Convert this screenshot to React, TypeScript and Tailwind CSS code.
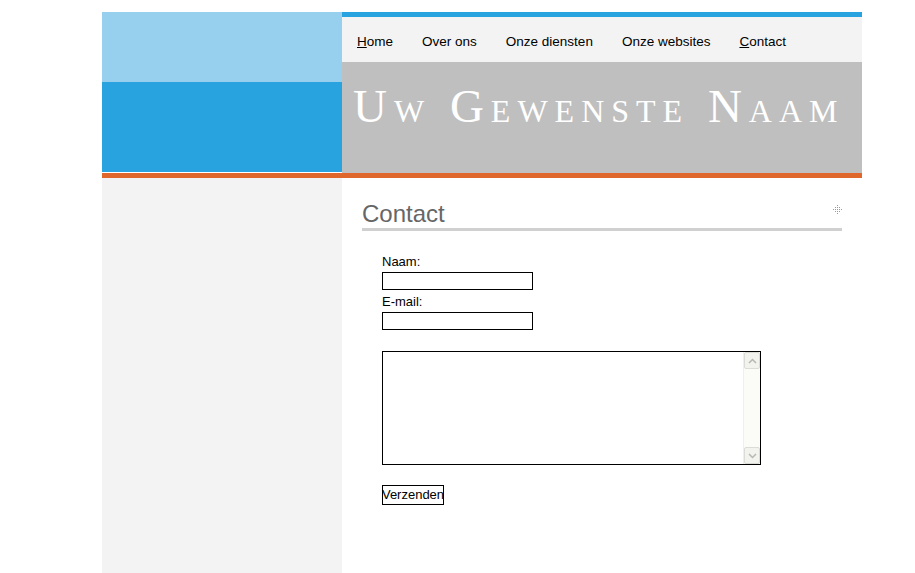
import React from 'react';

const navItems = [
  { first: 'H', rest: 'ome', u: true },
  { first: 'O', rest: 'ver ons', u: false },
  { first: 'O', rest: 'nze diensten', u: false },
  { first: 'O', rest: 'nze websites', u: false },
  { first: 'C', rest: 'ontact', u: true },
];

const TitleWord: React.FC<{ word: string }> = ({ word }) => (
  <span>
    <span className="text-[47px]">{word[0]}</span>
    <span className="text-[32px]">{word.slice(1).toUpperCase()}</span>
  </span>
);

const DotIcon = () => (
  <svg width="9" height="10" viewBox="0 0 9 10" className="mt-[5px]">
    {[
      [4, 0],
      [2, 2], [4, 2], [6, 2],
      [0, 4], [2, 4], [4, 4], [6, 4], [8, 4],
      [2, 6], [4, 6], [6, 6],
      [4, 8],
    ].map(([x, y], i) => (
      <rect key={i} x={x} y={y} width="1" height="1" fill="#9a9a9a" />
    ))}
  </svg>
);

const Scrollbar = () => (
  <div className="w-[17px] bg-[#fbfbf7] flex flex-col justify-between border-l border-[#f0f0ea]">
    <div className="h-[17px] bg-[#f2f2ee] border border-[#dcdcd6] rounded-[2px] flex items-center justify-center">
      <svg width="9" height="6" viewBox="0 0 9 6"><path d="M1 5 L4.5 1.5 L8 5" stroke="#b8b8b2" strokeWidth="1.5" fill="none" /></svg>
    </div>
    <div className="h-[17px] bg-[#f2f2ee] border border-[#dcdcd6] rounded-[2px] flex items-center justify-center">
      <svg width="9" height="6" viewBox="0 0 9 6"><path d="M1 1 L4.5 4.5 L8 1" stroke="#b8b8b2" strokeWidth="1.5" fill="none" /></svg>
    </div>
  </div>
);

export default function App() {
  return (
    <div className="min-h-screen bg-white pt-3 font-['Liberation_Sans',Arial,sans-serif] text-black">
      <div className="ml-[102px] w-[760px]">
        {/* header */}
        <div className="flex h-[161px]">
          <div className="w-[240px] flex flex-col">
            <div className="h-[70px] bg-[#97d0ef]" />
            <div className="h-[90px] bg-[#29a3df]" />
            <div className="h-[1px] bg-white" />
          </div>
          <div className="flex-1 flex flex-col">
            <div className="h-[5px] bg-[#29a3df]" />
            <nav className="h-[45px] bg-[#f3f3f3] flex gap-[29px] pl-[15px] pt-[17px] text-[13.5px] leading-[16px]">
              {navItems.map((n, i) => (
                <a key={i} href="#" className="text-black no-underline">
                  {n.u ? <u>{n.first}</u> : n.first}
                  {n.rest}
                </a>
              ))}
            </nav>
            <div className="h-[111px] bg-[#bfbfbf] pl-[11px] pt-[20px] text-white font-['Liberation_Serif',serif] text-[47px] leading-[48px] tracking-[7px] whitespace-nowrap">
              <TitleWord word="Uw" /> <TitleWord word="Gewenste" /> <TitleWord word="Naam" />
            </div>
          </div>
        </div>
        <div className="h-[5px] bg-[#e0672b]" />

        {/* body */}
        <div className="flex">
          <div className="w-[240px] h-[395px] bg-[#f3f3f3]" />
          <div className="flex-1 px-[20px] pt-[22px]">
            <div className="flex justify-between border-b-[3px] border-[#d0d0d0]">
              <h1 className="text-[24px] leading-[28px] text-[#666]">Contact</h1>
              <DotIcon />
            </div>
            <form className="pl-[20px] pt-[23px] text-[13px] leading-[16px]">
              <label className="block">Naam:</label>
              <input type="text" className="block mt-[2px] w-[151px] h-[18px] border border-black bg-white outline-none" />
              <label className="block mt-[4px]">E-mail:</label>
              <input type="text" className="block mt-[2px] w-[151px] h-[18px] border border-black bg-white outline-none" />
              <div className="mt-[21px] w-[379px] h-[114px] border border-black flex">
                <textarea className="flex-1 resize-none outline-none border-0 bg-white" />
                <Scrollbar />
              </div>
              <button type="button" className="mt-[20px] w-[62px] h-[20px] border border-black bg-white text-[13px] leading-[18px] px-0 flex items-center justify-center overflow-visible">
                Verzenden
              </button>
            </form>
          </div>
        </div>
      </div>
    </div>
  );
}
